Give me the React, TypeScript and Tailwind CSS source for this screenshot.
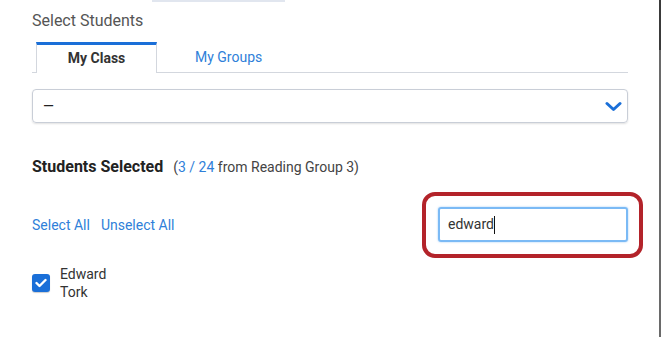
import React from 'react';

const linkBlue = 'text-[#2f7fd9]';

export default function App() {
    return (
        <div className="w-[661px] h-[337px] bg-white overflow-hidden flex font-['Roboto',sans-serif]">
            <main className="flex-1 flex flex-col pl-8 pr-[31px]">
                {/* remnant of element above */}
                <div className="h-[2px] w-[133px] ml-[120px] bg-[#e1e6ef]" />

                <h2 className="mt-[9px] text-[16px] leading-[20px] text-[#555]">Select Students</h2>

                {/* Tabs */}
                <div className="mt-[11px] flex items-end border-b border-[#d3d7de] h-[31px]">
                    <button className="ml-[4px] w-[121px] h-[31px] -mb-px bg-white border-t-[3px] border-t-[#1a6fd8] border-x border-x-[#d3d7de] text-[14px] font-bold text-[#333] pb-[2px]">
                        My Class
                    </button>
                    <button className={`ml-[38px] h-[31px] text-[14px] ${linkBlue} pt-[1px]`}>My Groups</button>
                </div>

                {/* Dropdown */}
                <div className="mt-[16px] h-[34px] flex items-center justify-between rounded-[4px] border border-[#c9ced7] shadow-[0_1px_2px_rgba(0,0,0,0.12)] pl-[10px] pr-[5px]">
                    <span className="text-[14px] text-[#222]">—</span>
                    <svg width="17" height="11" viewBox="0 0 17 11">
                        <polyline points="2,2.5 8.5,8.5 15,2.5" fill="none" stroke="#1a6fd8" strokeWidth="3" strokeLinecap="round" strokeLinejoin="round" />
                    </svg>
                </div>

                {/* Summary */}
                <div className="mt-[34px] flex items-baseline gap-[10px] leading-[20px]">
                    <h3 className="text-[16px] font-bold text-[#222]">Students Selected</h3>
                    <span className="text-[14px] text-[#444]">
                        (<span className={linkBlue}>3 / 24</span> from Reading Group 3)
                    </span>
                </div>

                {/* Actions + search */}
                <div className="mt-[15px] flex items-center justify-between">
                    <div className={`flex gap-[11px] text-[14px] ${linkBlue} pt-[1px]`}>
                        <button>Select All</button>
                        <button>Unselect All</button>
                    </div>
                    <div className="-mr-[15px] border-4 border-[#b3232a] rounded-[13px] pt-[11px] pr-[11px] pb-[12px] pl-[12px]">
                        <div className="w-[190px] h-[35px] rounded-[3px] border-2 border-[#7bbaf5] shadow-[0_0_2px_rgba(80,160,240,0.6)] flex items-center pl-[8px]">
                            <span className="text-[14px] text-[#333]">edward</span>
                            <span className="w-px h-[18px] bg-[#111]" />
                        </div>
                    </div>
                </div>

                {/* Students */}
                <label className="mt-[7px] flex items-center gap-[10px]">
                    <span className="w-[18px] h-[18px] rounded-[3px] bg-[#1a6fd8] flex items-center justify-center shadow-[0_1px_1px_rgba(0,0,0,0.2)]">
                        <svg width="12" height="10" viewBox="0 0 12 10">
                            <polyline points="1.5,5 4.5,8 10.5,2" fill="none" stroke="#fff" strokeWidth="2.4" strokeLinecap="round" strokeLinejoin="round" />
                        </svg>
                    </span>
                    <span className="text-[14px] leading-[18px] text-[#333]">
                        Edward
                        <br />
                        Tork
                    </span>
                </label>
            </main>

            {/* window edge */}
            <div className="w-[2px] flex flex-col">
                <div className="h-[50px] bg-[#3a3a3a]" />
                <div className="flex-1 bg-[#6a6a6a]" />
            </div>
        </div>
    );
}
